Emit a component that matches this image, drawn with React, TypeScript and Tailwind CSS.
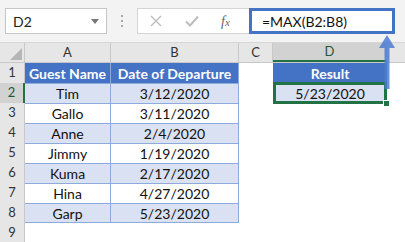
import React from 'react'

const font = { fontFamily: 'Lato, "Open Sans", "Liberation Sans", sans-serif' }

type Row = { n: number; name?: string; date?: string }

const rows: Row[] = [
  { n: 2, name: 'Tim', date: '3/12/2020' },
  { n: 3, name: 'Gallo', date: '3/11/2020' },
  { n: 4, name: 'Anne', date: '2/4/2020' },
  { n: 5, name: 'Jimmy', date: '1/19/2020' },
  { n: 6, name: 'Kuma', date: '2/17/2020' },
  { n: 7, name: 'Hina', date: '4/27/2020' },
  { n: 8, name: 'Garp', date: '5/23/2020' },
]

function FormulaBar() {
  return (
    <div className="h-[43px] bg-[#f3f3f3] flex items-start pt-[8px] border-b border-[#d6d6d6]">
      {/* name box */}
      <div className="ml-[5px] w-[102px] h-[26px] bg-white border border-[#c6c6c6] flex items-center justify-between pl-[7px] pr-[7px]">
        <span className="text-[14px] text-[#222]">D2</span>
        <svg width="8" height="5" viewBox="0 0 8 5"><path d="M0 0h8L4 5z" fill="#777" /></svg>
      </div>
      <div className="w-[30px] h-[26px] flex flex-col items-center justify-center gap-[3px]">
        <span className="w-[2px] h-[2px] bg-[#aaa]" />
        <span className="w-[2px] h-[2px] bg-[#aaa]" />
        <span className="w-[2px] h-[2px] bg-[#aaa]" />
      </div>
      {/* cancel / enter / fx */}
      <div className="w-[112px] h-[26px] bg-white border border-[#d4d4d4] border-r-0 flex items-center pl-[12px]">
        <svg width="12" height="12" viewBox="0 0 12 12"><path d="M1 1l10 10M11 1L1 11" stroke="#bdbdbd" strokeWidth="1.4" /></svg>
        <svg className="ml-[23px]" width="14" height="12" viewBox="0 0 14 12"><path d="M1 6.5l4 4L13 1.5" stroke="#bdbdbd" strokeWidth="2" fill="none" /></svg>
        <span className="ml-[22px] italic text-[14px] text-[#666]" style={{ fontFamily: '"Liberation Serif", serif' }}>f<span className="text-[11px]">x</span></span>
      </div>
      <div className="w-[146px] h-[26px] bg-white border-[3px] border-[#4472c4] flex items-center pl-[10px]">
        <span className="text-[14px] text-[#111]">=MAX(B2:B8)</span>
      </div>
    </div>
  )
}

function ColHeaders() {
  return (
    <div className="flex h-[20px] bg-[#e6e6e6] text-[13px] text-[#333] border-b border-[#c8c8c8]">
      <div className="w-[25px] border-r border-[#c8c8c8] relative">
        <svg className="absolute right-[2px] bottom-[2px]" width="12" height="12" viewBox="0 0 12 12"><path d="M12 0v12H0z" fill="#b5b5b5" /></svg>
      </div>
      <div className="w-[86px] border-r border-[#c8c8c8] flex items-center justify-center">A</div>
      <div className="w-[128px] border-r border-[#c8c8c8] flex items-center justify-center">B</div>
      <div className="w-[34px] border-r border-[#c8c8c8] flex items-center justify-center">C</div>
      <div className="w-[114px] bg-[#d2d2d2] border-r border-[#c8c8c8] border-b-2 border-b-[#217346] flex items-center justify-center text-[#1d5a36]">D</div>
      <div className="flex-1" />
    </div>
  )
}

function RowHead({ n, active }: { n: number; active?: boolean }) {
  return (
    <div
      className={
        active
          ? 'w-[25px] bg-[#d2d2d2] border-r-2 border-[#217346] text-[#1d5a36] flex items-center justify-center text-[13px]'
          : 'w-[25px] bg-[#e6e6e6] border-r border-[#c8c8c8] text-[#333] flex items-center justify-center text-[13px]'
      }
    >
      {n}
    </div>
  )
}

export default function App() {
  return (
    <div className="w-[405px] h-[242px] bg-white overflow-hidden relative" style={font}>
      <FormulaBar />
      <ColHeaders />
      {/* header row */}
      <div className="flex h-[20px]">
        <RowHead n={1} />
        <div className="w-[86px] bg-[#4472c4] text-white font-bold text-[14px] flex items-center justify-center border-r border-[#8ea9db]">Guest Name</div>
        <div className="w-[128px] bg-[#4472c4] text-white font-bold text-[14px] flex items-center justify-center border-r border-[#8ea9db]">Date of Departure</div>
        <div className="w-[34px]" />
        <div className="w-[114px] bg-[#4472c4] text-white font-bold text-[14px] flex items-center justify-center">Result</div>
      </div>
      {rows.map((r) => {
        const band = r.n % 2 === 0 ? 'bg-[#d9e1f2]' : 'bg-white'
        return (
          <div key={r.n} className="flex h-[20px]">
            <RowHead n={r.n} active={r.n === 2} />
            <div className={`w-[86px] ${band} border-t border-r border-[#8ea9db] ${r.n === 8 ? 'border-b' : ''} flex items-center justify-center text-[14px] text-[#111]`}>{r.name}</div>
            <div className={`w-[128px] ${band} border-t border-r border-[#8ea9db] ${r.n === 8 ? 'border-b' : ''} flex items-center justify-center text-[14px] text-[#111]`}>{r.date}</div>
            <div className="w-[34px]" />
            {r.n === 2 ? (
              <div className="w-[114px] relative bg-[#d9e1f2] border-[3px] border-[#217346] -mt-[1px] h-[22px] flex items-center justify-center text-[14px] text-[#111]">
                5/23/2020
                <span className="absolute -right-[6px] -bottom-[6px] w-[7px] h-[7px] bg-[#217346] border border-white" />
              </div>
            ) : null}
          </div>
        )
      })}
      <div className="flex h-[20px]">
        <RowHead n={9} />
      </div>
      {/* blue arrow pointing at the formula */}
      <svg className="absolute left-[379px] top-[35px]" width="16" height="54" viewBox="0 0 16 54">
        <path d="M8 0L16 13H10.5V54H5.5V13H0z" fill="#4a7bd0" fillOpacity="0.85" />
      </svg>
    </div>
  )
}
